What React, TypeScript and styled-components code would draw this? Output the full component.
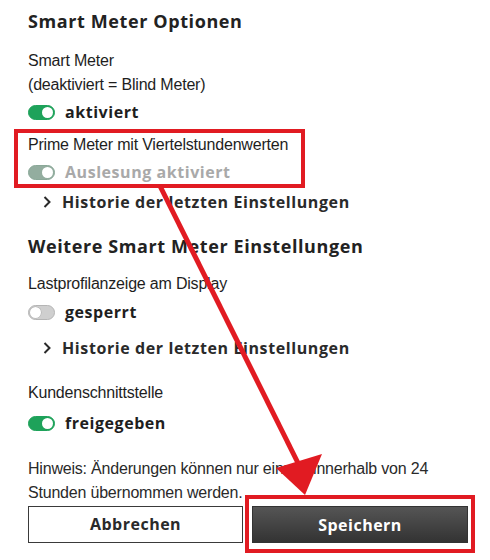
import React from "react";
import styled, { createGlobalStyle } from "styled-components";

const GlobalStyle = createGlobalStyle`
  html, body {
    margin: 0;
    padding: 0;
    background: #ffffff;
  }
  body {
    font-family: "Liberation Sans", Arial, sans-serif;
    color: #1e1e1e;
  }
  * { box-sizing: border-box; }
`;

const RED = "#e11b22";
const BOLD_FONT = `"Open Sans", "Lato", sans-serif`;

const Page = styled.div`
  position: relative;
  width: 490px;
  height: 560px;
  overflow: hidden;
  padding: 9px 0 0 28px;
  display: flex;
  flex-direction: column;
  align-items: flex-start;
`;

const SectionTitle = styled.h2<{ $mt?: number }>`
  margin: ${(p) => p.$mt ?? 0}px 0 0 0;
  font-family: ${BOLD_FONT};
  font-weight: 700;
  font-size: 18px;
  line-height: 24px;
  letter-spacing: 0.6px;
  color: #222;
`;

const Label = styled.p<{ $mt?: number }>`
  margin: ${(p) => p.$mt ?? 0}px 0 0 0;
  font-size: 16px;
  line-height: 24px;
  letter-spacing: -0.2px;
  color: #1e1e1e;
`;

const ToggleRow = styled.div<{ $mt?: number }>`
  margin-top: ${(p) => p.$mt ?? 0}px;
  height: 24px;
  display: flex;
  align-items: center;
  gap: 10px;
`;

const Track = styled.span<{ $on: boolean; $disabled?: boolean }>`
  position: relative;
  display: inline-block;
  width: 27px;
  height: 15px;
  border-radius: 8px;
  background: ${(p) => (p.$disabled ? "#93ad9f" : p.$on ? "#1ea25a" : "#cfcfcf")};
  border: 1px solid ${(p) => (p.$disabled ? "#8aa898" : p.$on ? "#1ea25a" : "#b5b5b5")};
  flex: none;
`;

const Knob = styled.span<{ $on: boolean }>`
  position: absolute;
  top: 1px;
  ${(p) => (p.$on ? "right: 1px;" : "left: 1px;")}
  width: 11px;
  height: 11px;
  border-radius: 50%;
  background: #ffffff;
  ${(p) => (p.$on ? "" : "box-shadow: 0 0 0 0.5px #aaa;")}
`;

const ToggleText = styled.span<{ $disabled?: boolean }>`
  font-family: ${BOLD_FONT};
  font-weight: 700;
  font-size: 16px;
  letter-spacing: 0.55px;
  color: ${(p) => (p.$disabled ? "#a9a9a9" : "#1e1e1e")};
`;

const HistoryRow = styled.div<{ $mt?: number }>`
  margin-top: ${(p) => p.$mt ?? 0}px;
  height: 24px;
  padding-left: 15px;
  display: flex;
  align-items: center;
  gap: 11px;
  font-family: ${BOLD_FONT};
  font-weight: 700;
  font-size: 16px;
  letter-spacing: 0.6px;
  color: #2a2a2a;
`;

const Highlight = styled.div<{ $mt?: number }>`
  margin: ${(p) => p.$mt ?? 0}px 0 0 -14px;
  width: 291px;
  border: 4px solid ${RED};
  padding: 0 10px;
`;

const Note = styled.p`
  margin: 22px 0 0 0;
  width: 450px;
  font-size: 16px;
  line-height: 24px;
  letter-spacing: -0.2px;
  color: #2a2a2a;
`;

const ButtonRow = styled.div`
  margin-top: -10px;
  display: flex;
  align-items: center;
  gap: 2px;
`;

const Button = styled.button<{ $primary?: boolean }>`
  width: ${(p) => (p.$primary ? 216 : 215)}px;
  height: 37px;
  font-family: ${BOLD_FONT};
  font-weight: 700;
  font-size: 16px;
  letter-spacing: 0.5px;
  cursor: pointer;
  color: ${(p) => (p.$primary ? "#ffffff" : "#2a2a2a")};
  background: ${(p) =>
    p.$primary ? "linear-gradient(#555555, #333333)" : "#ffffff"};
  border: 1px solid ${(p) => (p.$primary ? "#333" : "#3a3a3a")};
  border-radius: 0;
`;

const ButtonHighlight = styled.div`
  border: 4px solid ${RED};
  padding: 7px 3px 6px 3px;
`;

const Overlay = styled.svg`
  position: absolute;
  left: 0;
  top: 0;
  pointer-events: none;
`;

function Toggle({ on, disabled, label }: { on: boolean; disabled?: boolean; label: string }) {
  return (
    <>
      <Track $on={on} $disabled={disabled}>
        <Knob $on={on} />
      </Track>
      <ToggleText $disabled={disabled}>{label}</ToggleText>
    </>
  );
}

function Chevron() {
  return (
    <svg width="8" height="12" viewBox="0 0 8 12">
      <path d="M1.5 1 L6.5 6 L1.5 11" fill="none" stroke="#2a2a2a" strokeWidth="2" />
    </svg>
  );
}

export default function App() {
  return (
    <>
      <GlobalStyle />
      <Page>
        <SectionTitle>Smart Meter Optionen</SectionTitle>
        <Label $mt={16}>
          Smart Meter
          <br />
          (deaktiviert = Blind Meter)
        </Label>
        <ToggleRow $mt={3}>
          <Toggle on label="aktiviert" />
        </ToggleRow>

        <Highlight $mt={5}>
          <Label>Prime Meter mit Viertelstundenwerten</Label>
          <ToggleRow $mt={3}>
            <Toggle on disabled label="Auslesung aktiviert" />
          </ToggleRow>
        </Highlight>

        <HistoryRow $mt={2}>
          <Chevron />
          Historie der letzten Einstellungen
        </HistoryRow>

        <SectionTitle $mt={20}>Weitere Smart Meter Einstellungen</SectionTitle>
        <Label $mt={14}>Lastprofilanzeige am Display</Label>
        <ToggleRow $mt={4}>
          <Toggle on={false} label="gesperrt" />
        </ToggleRow>
        <HistoryRow $mt={12}>
          <Chevron />
          Historie der letzten Einstellungen
        </HistoryRow>

        <Label $mt={21}>Kundenschnittstelle</Label>
        <ToggleRow $mt={6}>
          <Toggle on label="freigegeben" />
        </ToggleRow>

        <Note>
          Hinweis: Änderungen können nur einmal innerhalb von 24
          <br />
          Stunden übernommen werden.
        </Note>

        <ButtonRow>
          <Button>Abbrechen</Button>
          <ButtonHighlight>
            <Button $primary>Speichern</Button>
          </ButtonHighlight>
        </ButtonRow>

        <Overlay width="490" height="560" viewBox="0 0 490 560">
          <line x1="160" y1="186" x2="298" y2="463" stroke={RED} strokeWidth="5" />
          <polygon points="305,495 276,468 322,454" fill={RED} />
        </Overlay>
      </Page>
    </>
  );
}
